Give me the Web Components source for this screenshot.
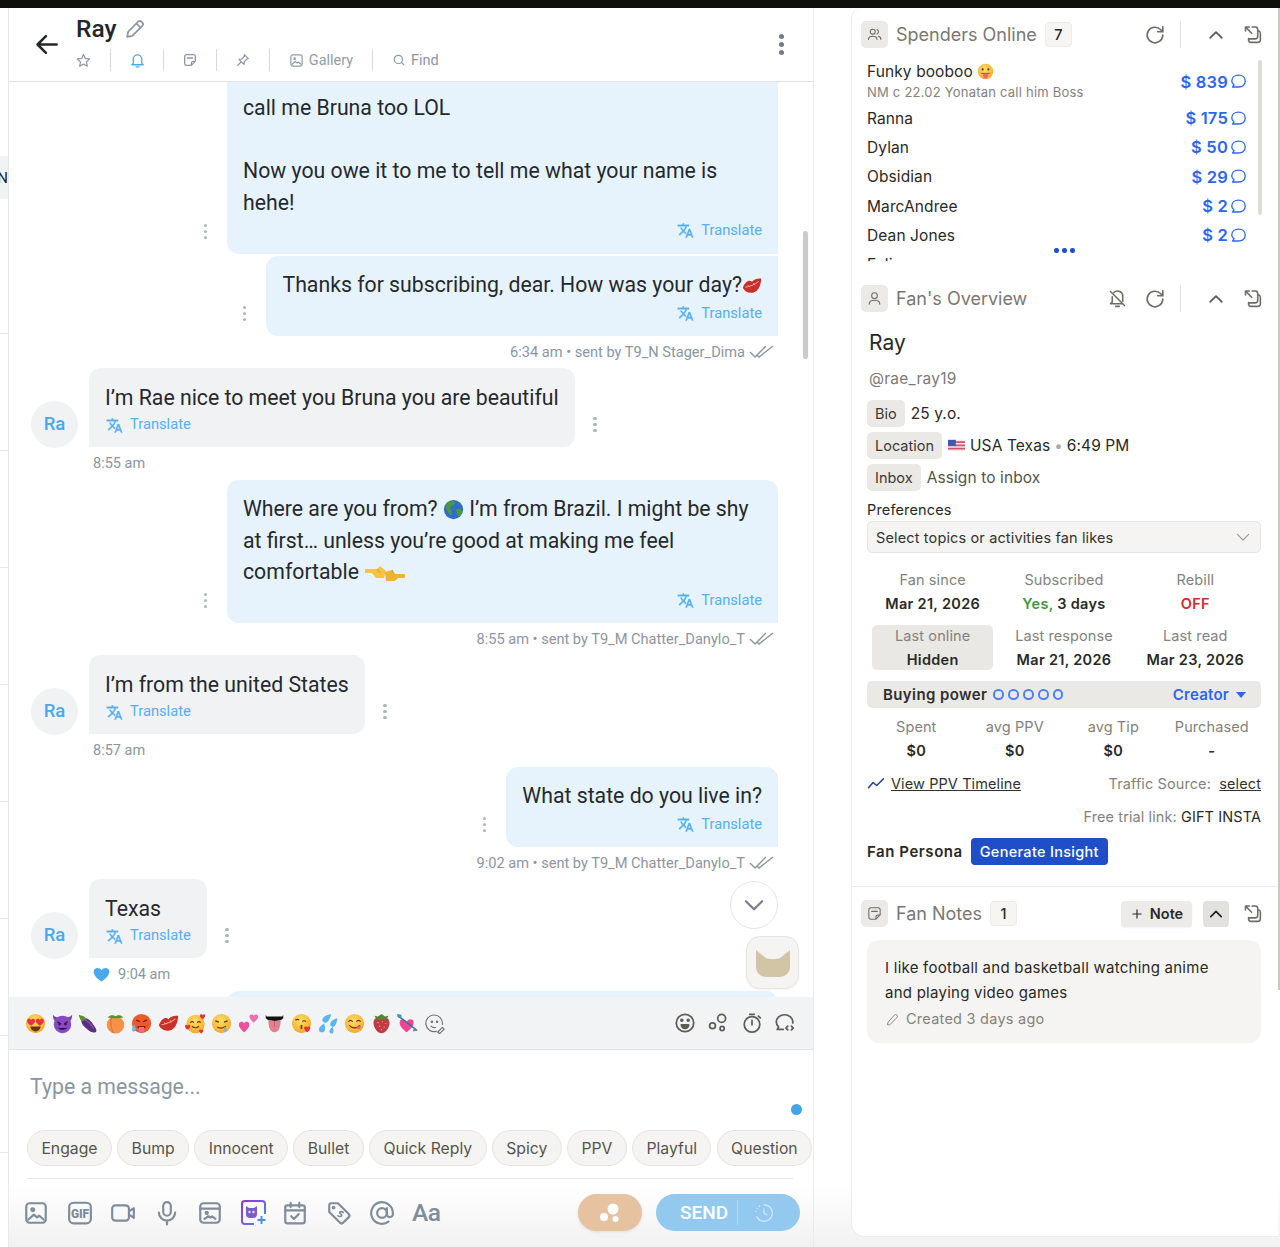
<!DOCTYPE html>
<html lang="en"><head><meta charset="utf-8"><title>Chat</title>
<style>
html,body{margin:0;padding:0;background:#fff}
body{font-family:Inter,"Liberation Sans",sans-serif}
</style></head><body>
<x-app>
  <x-topbar></x-topbar>
  <x-main>
    <x-rail></x-rail>
    <x-chat>
      <x-chat-header></x-chat-header>
      <x-messages>
        <x-msg dir="out" first pt="50" pb="12.5" style="margin-top:-40px">call me Bruna too LOL<br><br>Now you owe it to me to tell me what your name is hehe!</x-msg>
        <x-msg dir="out" joined meta="6:34 am • sent by T9_N Stager_Dima">Thanks for subscribing, dear. How was your day?<x-emoji name="kiss" size="20"></x-emoji></x-msg>
        <x-msg dir="in" time="8:55 am">I’m Rae nice to meet you Bruna you are beautiful</x-msg>
        <x-msg dir="out" meta="8:55 am • sent by T9_M Chatter_Danylo_T">Where are you from? <x-emoji name="globe" size="21"></x-emoji> I’m from Brazil. I might be shy at first… unless you’re good at making me feel comfortable <x-emoji name="hands" size="42" h="18"></x-emoji></x-msg>
        <x-msg dir="in" time="8:57 am">I’m from the united States</x-msg>
        <x-msg dir="out" meta="9:02 am • sent by T9_M Chatter_Danylo_T">What state do you live in?</x-msg>
        <x-msg dir="in" time="9:04 am" heart>Texas</x-msg>
        <x-msg dir="out"> </x-msg>
      </x-messages>
      <x-composer></x-composer>
    </x-chat>
    <x-side>
      <x-section-head title="Spenders Online" icon="users" count="7" refresh expand></x-section-head>
      <x-spenders></x-spenders>
      <x-section-head title="Fan's Overview" icon="user" refresh expand belloff style="margin-top:24px"></x-section-head>
      <x-overview></x-overview>
      <x-section-head title="Fan Notes" icon="note" count="1" notes expand style="margin-top:13px"></x-section-head>
      <x-note></x-note>
    </x-side>
  </x-main>
</x-app>
<script>
const ICONS={
 back:'<path d="M21 12H4M11.5 4.5 4 12l7.5 7.5"/>',
 pencil:'<path d="M3.500 20.500l1-5.500L15.500 4a2.500 2.500 0 0 1 3.500 0l1 1a2.500 2.500 0 0 1 0 3.500L9 19.500z M13.500 6l4.500 4.500"/>',
 star:'<path d="M12 3.5l2.6 5.6 6 .7-4.4 4.2 1.2 6L12 17l-5.4 3 1.2-6-4.4-4.2 6-.7z"/>',
 bell:'<path d="M6 16V10a6 6 0 0 1 12 0v6l2 2H4z M10 21h4"/>',
 note:'<path d="M14 20H7a3 3 0 0 1-3-3V7a3 3 0 0 1 3-3h10a3 3 0 0 1 3 3v7zM14 20v-3a3 3 0 0 1 3-3h3M8 9h8"/>',
 pin:'<path d="M14 4l6 6-2 .5-4 4-.5 4L6 11l4-.5 4-4zM9 15l-5 5"/>',
 image:'<rect x="3" y="3" width="18" height="18" rx="3"/><circle cx="9" cy="9" r="1.300"/><path d="M5 18l5-4.500 3 2.500 2-1.500 4 3.500"/>',
 search:'<circle cx="11" cy="11" r="7"/><path d="M16 16l4.500 4.500"/>',
 users:'<circle cx="9.500" cy="8" r="3.500"/><path d="M3.500 19c0-3 2.500-4.500 6-4.500s6 1.500 6 4.500M15.500 4.800a3.500 3.500 0 0 1 0 6.400M17.500 14.500c2 .5 3.500 2 3.500 4.500"/>',
 user:'<circle cx="12" cy="8" r="4"/><path d="M4.500 20c0-3.500 3-5.500 7.500-5.500s7.500 2 7.500 5.500"/>',
 refresh:'<path d="M20.500 12a8.500 8.500 0 1 1-2.500-6L20.500 8.500M20.500 3v5.500H15"/>',
 up:'<path d="M5 15.500l7-7 7 7"/>',
 down:'<path d="M4.500 8.500 12 16l7.500-7.500"/>',
 expand:'<path d="M4 8V3.500h4.500M4 3.500l7 7M7.500 16.500V18a3 3 0 0 0 3 3H18a3 3 0 0 0 3-3V10.500a3 3 0 0 0-2.500-2.800M11.500 3.500H15a3 3 0 0 1 3 3V14a3 3 0 0 1-3 3H8"/>',
 belloff:'<path d="M8 5a6 6 0 0 1 10 5v5M6 10v6l-2 2h14M10 21h4M4 4l16 16"/>',
 chat:'<path d="M12 4c5 0 8.500 3 8.500 7.500S17 19 12 19H4.500l1.800-2.800C4.500 15 3.500 13.500 3.500 11.500 3.500 7 7 4 12 4z"/>',
 plus:'<path d="M12 5v14M5 12h14"/>',
 smile:'<circle cx="12" cy="12" r="9.500"/><circle cx="8.500" cy="9" r="1" fill="currentColor"/><circle cx="15.500" cy="9" r="1" fill="currentColor"/><path d="M8 14h8a4 4 0 0 1-8 0z" fill="currentColor"/>',
 bubbles:'<circle cx="16" cy="7" r="4.300"/><circle cx="6" cy="15" r="3.200"/><circle cx="16.500" cy="18" r="2.300"/>',
 timer:'<circle cx="12" cy="13.500" r="8.500"/><path d="M12 9v5M9.500 2.500h5M19 4.500l2 2"/>',
 chatcode:'<path d="M10 19H3.500l1.500-2.500C3.500 15 2.500 13 2.500 11c0-4.500 4-8 9-8s9 3.500 9 8v1"/><path d="M15 15.500l-2 2 2 2M19 15.500l2 2-2 2"/>',
 video:'<rect x="2" y="5" width="15.500" height="14" rx="3"/><path d="M17.500 10.500l4.500-3v9l-4.500-3"/>',
 mic:'<rect x="8.500" y="2" width="7" height="12.500" rx="3.500"/><path d="M4.500 11.500a7.500 7.500 0 0 0 15 0M12 19v3.500"/>',
 album:'<rect x="3" y="3" width="18" height="18" rx="3"/><path d="M3 8h18"/><circle cx="9" cy="12" r="1"/><path d="M7 17.500l3.500-2.500 2 1.200 1.500-1 3 2.300"/>',
 cal:'<rect x="3" y="5" width="18" height="16.500" rx="2"/><path d="M3 9.500h18M8 2.500v4M16 2.500v4M8.500 15l2.500 2.500 4.500-4.500"/>',
 tag:'<path d="M3 5a2 2 0 0 1 2-2h6l10 10a2 2 0 0 1 0 2.800L15.800 21a2 2 0 0 1-2.800 0L3 11z"/><circle cx="7" cy="7" r=".8"/><path d="M16 11.500c-1-1-3-1-3.500 0s2.500 1.500 2 3c-.5 1-2.500 1-3.500 0" stroke-width="1.500"/>',
 at:'<circle cx="12" cy="12" r="4.500"/><path d="M16.500 7.500V14a3 3 0 0 0 5.500 0v-2a10 10 0 1 0-4 8"/>',
 clock:'<path d="M12 3a9 9 0 1 1-8 13"/><path d="M3.200 10v.1M4.500 7v.1M7 4.500v.1M12 7.500V12l3 2"/>',
 pen2:'<path d="M4 20l1-4L15 5a2.800 2.800 0 0 1 4 4L8 20z"/>',
 trend:'<path d="M2 17l6-7 5 4 9-9"/>',
 smilepen:'<path d="M14 21a9.500 9.500 0 1 1 7-8"/><circle cx="9" cy="10" r=".8"/><circle cx="15" cy="10" r=".8"/><path d="M8 15c1.500 1.500 3 2 5 1.500M15.500 22l5.500-5.500 2 2-5 5z"/>'
};
const EMOJI={
 heartEyes:`<circle cx="12" cy="12" r="11" fill="url(#f)"/><path d="M2.500 8.500C3 6 6 6 7 8c1-2 4-2 4.500.5S9 13 7 14.500C5 13 2 11 2.500 8.500zM12.500 8.500C13 6 16 6 17 8c1-2 4-2 4.500.5S19 13 17 14.500C15 13 12 11 12.500 8.500z" fill="#e8323c"/><path d="M6 15.500h12c-.5 3.500-3 5.500-6 5.500s-5.500-2-6-5.500z" fill="#6b3410"/>`,
 devil:`<path d="M1 2c0 4 1 7 4 8l4-5C6 5 3 5 1 2zM23 2c0 4-1 7-4 8l-4-5c3 0 6 0 8-3z" fill="#7b3fb0"/><circle cx="12" cy="13" r="10" fill="#8a49c4"/><path d="M6 10l4 2.500M18 10l-4 2.500" stroke="#2c1248" stroke-width="1.600"/><circle cx="8.500" cy="13" r="1.300" fill="#2c1248"/><circle cx="15.500" cy="13" r="1.300" fill="#2c1248"/><path d="M6.500 16.500c3 3.500 8 3.500 11 0-3 1-8 1-11 0z" fill="#2c1248"/>`,
 eggplant:`<path d="M6 6c4-1 8 2 12 8 3 4 4 7 2 8s-6 0-10-4C5 14 3 10 4 7z" fill="#5c2d82"/><path d="M8 8c3 1 7 5 10 10" stroke="#8e5cb5" stroke-width="1.200" fill="none"/><path d="M1 2l3 1c2 0 4 1 5 4-3 2-5 3-6 1S1 4 1 2z" fill="#5d8f2f"/>`,
 peach:`<circle cx="12" cy="13.500" r="10" fill="#f6914a"/><path d="M8 4c-2 4-2 13 2 19" stroke="#e06a30" stroke-width="1.100" fill="none"/><path d="M3 5c3-3 7-3 9-1 2-2 6-2 9 1-3 0-6 1-9 1S6 5 3 5z" fill="#5e8f30"/>`,
 hot:`<circle cx="12" cy="12" r="11" fill="#f0582c"/><path d="M6 8l4 2M18 8l-4 2" stroke="#5c1a0a" stroke-width="1.500"/><path d="M7 15h10l-1 2H8z" fill="#5c1a0a"/><path d="M9 16h6v3.500a3 3 0 0 1-6 0z" fill="#f06c8a"/><path d="M4 13c-2 3-3 4-3 6s3 3 4 1 0-4-1-7z" fill="#6db9ee"/>`,
 kiss:`<path d="M1 14C4 6 9 4 12 7c3-4 8-4 11-4 0 7-3 16-10 17-6 1-10-2-12-6z" fill="#c8302a"/><path d="M4 13.500c5-1 11-2.500 16-7M7 11l2 2M14 8.500l1 2.500" stroke="#f2a7a0" stroke-width="1.200" fill="none"/>`,
 hearts:`<circle cx="12" cy="12.500" r="10.500" fill="url(#f)"/><path d="M6 11c1.500-1.500 3-1.500 4 0M14 11c1-1.500 2.500-1.500 4 0" stroke="#6b3410" stroke-width="1.300" fill="none"/><path d="M8 15c2 2.500 6 2.500 8 0" stroke="#6b3410" stroke-width="1.300" fill="none"/><path d="M0 15c0-2 2.500-2 3-.5.500-1.500 3-1.500 3 .5s-2 3.500-3 4c-1-.5-3-2-3-4zM17 3c0-2 2.500-2 3-.5.500-1.500 3-1.500 3 .5s-2 3.500-3 4c-1-.5-3-2-3-4zM16 20c0-1.500 2-1.500 2.500-.5.500-1 2.500-1 2.500.5s-1.500 2.500-2.500 3.500c-1-1-2.500-2-2.500-3.500z" fill="#e8323c"/>`,
 drool:`<circle cx="12" cy="12" r="11" fill="url(#f)"/><path d="M5 9l4 1.500M19 9l-4 1.500M7 16c3 1.500 7 1.500 10-1" stroke="#6b3410" stroke-width="1.400" fill="none"/><path d="M16 16c-1 2-1.500 3-1 4.500s3 1 3-.5-1-2.500-2-4z" fill="#6db9ee"/>`,
 twoHearts:`<path d="M1 13c0-4 5-4 6-1 1-3 6-3 6 1s-4 7-6 9c-2-2-6-5-6-9z" fill="#ee4fa0"/><path d="M13 4c0-3 4-3 5-1 1-2 5-2 5 1s-3 5-5 7c-2-2-5-4-5-7z" fill="#f06cb4"/>`,
 tongue:`<path d="M3 4h18l1-2v4c-2 2-4 3-10 3S4 8 2 6V2z" fill="#111"/><path d="M5 8c4 1.500 10 1.500 14 0 0 8-2 14-7 14S5 16 5 8z" fill="#e2808f"/><path d="M12 9v7" stroke="#c25f70" stroke-width="1"/>`,
 kissHeart:`<circle cx="12" cy="12" r="11" fill="url(#f)"/><path d="M5 8c1.500-1 3-1 4.500 0M13 10c1-1.500 3-1.500 4 0" stroke="#6b3410" stroke-width="1.300" fill="none"/><path d="M11 14c2 .5 2 1.500 .5 2 1.500.5 1.500 1.500-.5 2" stroke="#6b3410" stroke-width="1.300" fill="none"/><path d="M15 17c0-2 3-2 3.500-.5.500-1.500 3.500-1.500 3.500.5s-2 4-3.500 5c-1.500-1-3.500-3-3.500-5z" fill="#e8323c"/>`,
 sweat:`<path d="M15 1c-6 1-10 4-10 7 0 3 4 4 6 2s3-5 4-9zM22 6c-5 1-8 4-8 7s4 3 5 2 3-5 3-9zM7 12c-3 2-6 4-6 7s4 4 6 2 1-6 0-9zM17 16c-2 1-4 3-4 5s3 3 4 2 1-4 0-7z" fill="#58b7f0"/>`,
 yum:`<circle cx="12" cy="12" r="11" fill="url(#f)"/><path d="M5 10c1.500-2 3.500-2 5 0M14 10c1.500-2 3.500-2 5 0M6 14c3 4 9 4 12 0" stroke="#6b3410" stroke-width="1.400" fill="none"/><path d="M14 16.500l5-2.500c1 2-.5 4.500-2 4.500s-2.500-1-3-2z" fill="#ef5f86"/>`,
 berry:`<path d="M12 5c6-1 10 2 9 8-1 5-5 10-9 10S4 18 3 13C2 7 6 4 12 5z" fill="#c43a40"/><path d="M4 3l4 1 4-3 4 3 4-1-2 4-6 1-6-1z" fill="#4e8a35"/><g fill="#f2b9a0"><circle cx="8" cy="11" r=".7"/><circle cx="13" cy="10" r=".7"/><circle cx="17" cy="12" r=".7"/><circle cx="10" cy="15" r=".7"/><circle cx="15" cy="16" r=".7"/><circle cx="12" cy="19" r=".7"/></g>`,
 arrowHeart:`<path d="M3 11c0-5 6-5 8-1 2-4 8-4 8 1s-5 8-8 11c-3-3-8-6-8-11z" fill="#ee4590"/><path d="M1 3l22 17" stroke="#3b6fa0" stroke-width="1.800"/><path d="M0 1l5 1 0 4-4-1zM20 16l3 4-5 1z" fill="#3f8fc0"/>`,
 tongueFace:`<circle cx="12" cy="12" r="11" fill="url(#f)"/><circle cx="8" cy="9" r="1.500" fill="#6b3410"/><circle cx="16" cy="9" r="1.500" fill="#6b3410"/><path d="M6 14h12v1H6z" fill="#6b3410"/><path d="M8.500 15h7v3.500a3.500 3.500 0 0 1-7 0z" fill="#f0608a"/>`,
 globe:`<circle cx="12" cy="12" r="11" fill="#2f6fc8"/><path d="M5 4c3-2 7-2 9 0l-2 3-3 1-1 3 2 3-1 5-3-4-3-5zM15 12l5-1 2 4-3 5-3-2z" fill="#4c9a3e"/>`,
 hands:`<path d="M1 4h12l3-3 6 5-2 7h-8l-4-5H1z" fill="#f6c342"/><path d="M41 9H31l-3-4-7 2 1 9h9l3-3h7z" fill="#eeb62e"/><path d="M13 4l3 4M28 5l2 4" stroke="#d99a18" stroke-width="1" fill="none"/>`,
 flag:`<rect x="0" y="4" width="24" height="16" rx="2" fill="#e9e9ee"/><path d="M0 6h24v2.300H0zM0 10.600h24v2.300H0zM0 15.200h24v2.300H0z" fill="#d5536a"/><rect x="0" y="4" width="11" height="8.500" fill="#3e5aa8"/>`,
 blueHeart:`<path d="M1 8c0-6 8-7 11-2 3-5 11-4 11 2 0 6-7 11-11 14C8 19 1 14 1 8z" fill="#4aa9ee"/>`
};
function def(tag,css,html,after){
 customElements.define(tag,class extends HTMLElement{
  connectedCallback(){
   if(this.shadowRoot)return;
   const r=this.attachShadow({mode:'open'});
   const h=typeof html==='function'?html(this):html;
   r.innerHTML='<style>'+css+'</style>'+h;
   if(after)after(this,r);
  }
 });
}
def('x-icon',`:host{display:inline-flex;align-items:center;justify-content:center;flex:none}svg{display:block;fill:none;stroke:currentColor;stroke-linecap:round;stroke-linejoin:round}`,
 el=>{const s=el.getAttribute('size')||20,w=el.getAttribute('w')||2;
 return `<svg width="${s}" height="${s}" viewBox="0 0 24 24" stroke-width="${w}">${ICONS[el.getAttribute('name')]||''}</svg>`});
def('x-emoji',`:host{display:inline-block;vertical-align:-4px;line-height:0}svg{display:block}`,
 el=>{const s=+el.getAttribute('size')||20,h=+el.getAttribute('h')||s,n=el.getAttribute('name');
 const vb=n==='hands'?'0 0 42 18':'0 0 24 24';
 return `<svg width="${s}" height="${h}" viewBox="${vb}" role="img"><defs><radialGradient id="f" cx=".45" cy=".35" r=".75"><stop offset="0" stop-color="#ffe066"/><stop offset="1" stop-color="#f2a01e"/></radialGradient></defs>${EMOJI[n]||''}</svg>`});
const TR=`<svg width="17" height="17" viewBox="0 0 24 24" fill="currentColor" stroke="currentColor" stroke-width=".5"><path d="M12.870 15.070l-2.540-2.510.030-.030c1.740-1.940 2.980-4.170 3.710-6.530H17V4h-7V2H8v2H1v1.990h11.170C11.500 7.920 10.440 9.750 9 11.350 8.070 10.320 7.300 9.190 6.690 8h-2c.730 1.630 1.730 3.170 2.980 4.560l-5.090 5.020L4 19l5-5 3.110 3.110.760-2.040zM18.500 10h-2L12 22h2l1.120-3h4.750L21 22h2l-4.500-12zm-2.620 7l1.620-4.330L19.120 17h-3.240z"/></svg>`;

def('x-app',`:host{display:flex;flex-direction:column;width:1280px;height:1247px;overflow:hidden;position:relative;background:linear-gradient(to bottom,#fff 1185px,#f1f1f1 1247px)}`,`<slot></slot>`);
def('x-topbar',`:host{display:block;height:8px;background:#100f0c;flex:none}`,``);
def('x-main',`:host{display:flex;flex:1;min-height:0}`,`<slot></slot>`);
def('x-rail',`:host{display:block;width:8px;flex:none;border-right:1px solid #e6e8ec;overflow:hidden;font:14px Roboto,sans-serif;background:#fff}
 .b{height:43px;margin-top:148px;background:#f1f2f4;color:#222;display:flex;align-items:center;justify-content:flex-end;font-size:15px;white-space:nowrap;overflow:hidden}
 .l{height:116px;border-bottom:1px solid #e6e8ec}.f{height:134px;border-bottom:1px solid #e6e8ec}`,
 `<div class="b">ON</div><div class="f"></div><div class="l"></div><div class="l"></div><div class="l"></div><div class="l"></div><div class="l"></div><div class="l"></div><div class="l"></div>`);
def('x-chat',`:host{display:flex;flex-direction:column;width:804px;flex:none;border-right:1px solid #e8eaed;font-family:Roboto,sans-serif;position:relative}`,`<slot></slot>`);
def('x-chat-header',`:host{display:flex;height:73px;flex:none;border-bottom:1px solid #dfe2e6;background:#fff;color:#8a96a3;position:relative;z-index:2}
 .arrow{padding-left:24px;color:#23262b;display:flex;align-items:center;margin-top:-1px;width:43px}
 .mid{flex:1;min-width:0}
 .name{display:flex;align-items:center;gap:8px;height:41px;font:500 24.500px/41px Roboto,sans-serif;color:#23262b}
 .name x-icon{color:#8a96a3}
 .row{display:flex;height:22px;margin-left:-18px}
 .c{width:53px;box-sizing:border-box;display:flex;align-items:center;justify-content:center;border-right:1px solid #d5d9de;font-size:14.500px;gap:5px;color:#8a96a3}
 .c.g{width:103px;color:#929ca7}.c.f{border:0;width:auto;padding-left:19px}
 .kb{width:32px;margin-right:16px;display:flex;align-items:center;justify-content:center}
 .kb i{display:block;width:5px;height:5px;border-radius:50%;background:#737d88;box-shadow:0 -8px #737d88,0 8px #737d88}`,
 `<div class="arrow"><x-icon name="back" size="27" w="2.200"></x-icon></div>
 <div class="mid"><div class="name">Ray <x-icon name="pencil" size="22" w="1.900"></x-icon></div>
 <div class="row"><div class="c"><x-icon name="star" size="17" w="1.700" style="margin-left:-2px"></x-icon></div><div class="c" style="color:#4aa9ee"><x-icon name="bell" size="17" w="1.800"></x-icon></div><div class="c"><x-icon name="note" size="16" w="1.900"></x-icon></div><div class="c"><x-icon name="pin" size="16" w="1.800"></x-icon></div><div class="c g"><x-icon name="image" size="15" w="1.900"></x-icon>Gallery</div><div class="c f"><x-icon name="search" size="14" w="2"></x-icon>Find</div></div></div>
 <div class="kb"><i></i></div>`);
def('x-messages',`:host{display:flex;flex-direction:column;flex:1;min-height:0;overflow:hidden;position:relative;background:#fff}
 .sb{position:absolute;left:794px;top:149px;width:5px;height:128px;border-radius:3px;background:#cbcbcb}
 .down{position:absolute;left:721px;top:799px;width:46px;height:46px;border:1px solid #e3e6ea;border-radius:50%;background:#fff;color:#75808c;display:flex;align-items:center;justify-content:center}
 .cat{position:absolute;left:737px;top:854px;width:51px;height:51px;border:1px solid #e7e5e1;border-radius:14px;background:#f5f4f2;display:flex;align-items:center;justify-content:center;box-shadow:0 1px 3px #0000000d}`,
 `<slot></slot><div class="sb"></div><div class="down"><x-icon name="down" size="26" w="2"></x-icon></div>
 <div class="cat"><svg width="36" height="30" viewBox="0 0 36 30"><path d="M1 2l10 8c2 1.500 12 1.500 14 0l10-8v17c0 6-5 10-11 10H12C6 29 1 25 1 19z" fill="#d1c5a5"/></svg></div>`);
def('x-msg',`:host{display:block;flex:none}
 .row{display:flex;align-items:flex-end;padding:0 35px 0 22px}
 .out{justify-content:flex-end}
 .bub{font-size:21.250px;line-height:31.500px;color:#25292e;padding:13px 16px 12px;box-sizing:border-box}
 .out .bub{background:#e6f3fc;border-radius:12px 12px 0 12px}
 .in .bub{background:#f1f2f4;border-radius:12px 12px 12px 0;padding:13.500px 16px 11.500px;margin-left:11px}
 .tight .bub{border-radius:12px 0 0 12px}
 .tr{display:flex;justify-content:flex-end;align-items:center;gap:7px;height:21.500px;margin-top:2px;color:#57aff0;font-size:14.700px;line-height:21.500px}
 .in .tr{justify-content:flex-start;padding-left:1px;margin-top:1px}
 .out .tr{padding-right:0}
 .av{width:47px;height:47px;border-radius:50%;background:#f1f2f4;color:#49a8ec;font:500 18.500px/47px Roboto,sans-serif;text-align:center;flex:none;position:relative;top:.5px}
 .kb{width:5px;display:flex;flex-direction:column;gap:2.500px;flex:none;margin-bottom:15px}
 .kb i{width:3.500px;height:3.500px;background:#aeb5bd;border-radius:50%;display:block}
 .out .kb{margin-right:18.500px}.in .kb{margin-left:18.500px}
 .meta{height:18px;margin-top:7px;margin-bottom:7.250px;font-size:14.600px;line-height:18px;color:#8b96a2;display:flex;align-items:center;justify-content:flex-end;padding-right:39px;gap:4px}
 .time{height:18px;margin-top:7.500px;margin-bottom:7.250px;font-size:14.500px;line-height:18px;color:#8b96a2;padding-left:84px;display:flex;align-items:center;gap:8px}
 .dbl{display:block}`,
 el=>{const d=el.getAttribute('dir'),m=el.getAttribute('meta'),t=el.getAttribute('time'),pb=el.getAttribute('pb'),pt=el.getAttribute('pt');
 const kb='<div class="kb"><i></i><i></i><i></i></div>';
 const st=(pb||pt)?` style="padding-bottom:${pb}px;padding-top:${pt}px"`:'';
 const has=el.textContent.trim()||el.children.length;
 const bub=`<div class="bub"${st} ${has?'':'data-e'}><slot></slot>${has?`<div class="tr">${TR}Translate</div>`:''}</div>`;
 return `<div class="${el.hasAttribute('joined')?'tight ':''}">
 <div class="row ${d}">${d==='in'?`<div class="av">Ra</div>`+bub+kb:(has?kb:'')+bub}</div>
 ${m?`<div class="meta">${m}<svg class="dbl" width="25" height="14" viewBox="0 0 25 14" fill="none" stroke="#8b96a2" stroke-width="1.400"><path d="M1 7l5 5L17 1M8 10l2 2L24 1"/></svg></div>`:''}
 ${t?`<div class="time">${el.hasAttribute('heart')?'<x-emoji name="blueHeart" size="17"></x-emoji>':''}${t}</div>`:''}</div>`},
 (el,r)=>{const b=r.querySelector('.bub[data-e]');if(b){b.style.width='551px';b.style.height='60px'}
  if(el.hasAttribute('joined')){el.style.marginTop='2px'}
  if(el.hasAttribute('first'))r.querySelector('.bub').style.width='551px';
  if(el.getAttribute('meta')&&el.textContent.includes('Brazil'))r.querySelector('.bub').style.width='551px';
 });
def('x-chip',`:host{display:inline-flex;align-items:center;height:36px;box-sizing:border-box;padding:0 13.400px;border:1px solid #e6e4e0;background:#f5f4f2;border-radius:18px;font:15.750px Inter,sans-serif;color:#56544d;flex:none;white-space:nowrap}`,`<slot></slot>`);
def('x-composer',`:host{display:block;flex:none;height:250px}
 .bar{height:52px;background:#f2f3f5;border-bottom:1px solid #e2e5e8;display:flex;align-items:center;padding-left:16px;position:relative}
 .em{display:flex;gap:5.600px;align-items:center}
 .act{margin-left:auto;display:flex;gap:11.500px;margin-right:17px;color:#5f5d53}
 .input{height:80px;position:relative;box-sizing:border-box;padding:25px 21px 0;font-size:21.250px;line-height:24px;color:#8a96a3;background:#fff}
 .dot{position:absolute;left:782px;top:54px;width:11px;height:11px;border-radius:50%;background:#45a5ea}
 .chips{display:flex;gap:5.300px;padding-left:18px;background:#fff;height:37px;overflow:hidden;white-space:nowrap;width:786px}
 .line{height:1px;background:#e9e9e7;margin:11px 20px 0 18px}
 .tools{display:flex;align-items:center;margin-top:15px;padding-left:14px;height:37px;color:#7f8c99}
 .tools x-icon{margin-right:17.600px}
 .aa{font:500 24.500px/24px Roboto,sans-serif;color:#7f8c99;letter-spacing:-.5px;margin-left:-1px}
 .gif{width:26px;height:26px;flex:none;margin-right:17.600px}
 .ai{width:27px;height:27px;flex:none;margin-right:15.300px;margin-left:-1px}
 .orange{margin-left:auto;width:64px;height:37px;border-radius:19px;background:#e6c2a0;display:flex;align-items:center;justify-content:center;margin-right:14px;box-shadow:0 1px 3px #0000001a}
 .send{width:144px;height:37px;border-radius:19px;background:#93c9ef;color:#fff;display:flex;align-items:center;margin-right:13px;font:500 19px Roboto,sans-serif}
 .send b{font-weight:500;padding-left:24px;border-right:1px solid #b5dbf5;height:25px;line-height:25px;margin-right:15px;width:57px}`,
 `<div class="bar"><div class="em">${['heartEyes','devil','eggplant','peach','hot','kiss','hearts','drool','twoHearts','tongue','kissHeart','sweat','yum','berry','arrowHeart'].map(n=>`<x-emoji name="${n}" size="21"></x-emoji>`).join('')}<x-icon name="smilepen" size="21" w="1.300" style="color:#6f716e"></x-icon></div>
 <div class="act"><x-icon name="smile" size="22" w="1.900"></x-icon><x-icon name="bubbles" size="22" w="1.900"></x-icon><x-icon name="timer" size="22" w="1.900"></x-icon><x-icon name="chatcode" size="22" w="1.900"></x-icon></div></div>
 <div class="input">Type a message...<div class="dot"></div></div>
 <div class="chips">${['Engage','Bump','Innocent','Bullet','Quick Reply','Spicy','PPV','Playful','Question'].map(c=>`<x-chip>${c}</x-chip>`).join('')}</div>
 <div class="line"></div>
 <div class="tools"><x-icon name="image" size="26" w="2"></x-icon>
 <svg class="gif" viewBox="0 0 24 24" fill="none" stroke="currentColor" stroke-width="2"><rect x="2" y="2.500" width="20" height="19" rx="4"/><text x="12" y="16.500" font-family="Roboto" font-size="11" font-weight="900" text-anchor="middle" fill="currentColor" stroke="none">GIF</text></svg>
 <x-icon name="video" size="26" w="2"></x-icon><x-icon name="mic" size="26" w="2"></x-icon><x-icon name="album" size="26" w="2"></x-icon>
 <svg class="ai" viewBox="0 0 27 27" fill="none"><defs><linearGradient id="g" x1="0" y1="0" x2="1" y2="1"><stop offset="0" stop-color="#9b30d8"/><stop offset="1" stop-color="#4b8fe8"/></linearGradient></defs><path d="M14 25H5a3 3 0 0 1-3-3V5a3 3 0 0 1 3-3h17a3 3 0 0 1 3 3v10" stroke="url(#g)" stroke-width="2"/><path d="M6 7l3 2h5l3-2v8a4 4 0 0 1-4 4h-3a4 4 0 0 1-4-4z" fill="#7c5cc8"/><circle cx="9.500" cy="13" r="1.200" fill="#e6e0f8"/><circle cx="13.500" cy="13" r="1.200" fill="#e6e0f8"/><path d="M21.500 17v8M17.500 21h8" stroke="#4b8fe8" stroke-width="2"/></svg>
 <x-icon name="cal" size="26" w="2"></x-icon><x-icon name="tag" size="26" w="2"></x-icon><x-icon name="at" size="26" w="2"></x-icon><span class="aa">Aa</span>
 <div class="orange"><svg width="24" height="24" viewBox="0 0 24 24" fill="#fff"><circle cx="15" cy="8" r="5.500"/><circle cx="6" cy="16" r="4"/><circle cx="17.500" cy="18" r="3"/></svg></div>
 <div class="send"><b>SEND</b><x-icon name="clock" size="22" w="1.500" style="color:#cfe6f8;margin:0"></x-icon></div></div>`);
def('x-side',`:host{display:block;width:427px;margin-left:37px;flex:none;height:1229px;border-left:1px solid #ececea;border-bottom:1px solid #ececea;border-radius:10px 0 0 14px;box-sizing:border-box;background:#fff;position:relative;font-family:Inter,sans-serif;color:#2a2926}
 .bar{position:absolute;left:426px;top:0;width:2px;height:982px;background:#c9c8c4}`,`<slot></slot><div class="bar"></div>`);
def('x-section-head',`:host{display:flex;align-items:center;height:27px;padding:0 15px 0 9px;position:relative}
 :host(:first-child){margin-top:13px}
 .ib{width:27px;height:27px;border-radius:5px;background:#eceae7;color:#6e6c66;display:flex;align-items:center;justify-content:center;flex:none}
 .t{margin-left:8px;font-size:18px;color:#7a7771;white-space:nowrap}
 .c{margin-left:8px;width:27px;height:25px;border:1px solid #ecebe8;border-radius:4px;background:#f6f5f3;font-size:14.500px;font-weight:500;display:flex;align-items:center;justify-content:center;color:#2a2926;box-sizing:border-box}
 .sp{flex:1}.a{color:#6e6c66;display:flex;align-items:center}
 .d{width:1px;height:27px;background:#e6e5e2;margin:0 25px 0 14px}
 .note{width:71px;height:26px;border-radius:4px;background:#ecebe8;font-size:14.500px;font-weight:600;display:flex;align-items:center;justify-content:center;gap:6px;color:#2a2926;box-shadow:0 1px 2px #0000000f;margin-right:11px}
 .cv{width:26px;height:26px;border-radius:4px;background:#e2e1dd;display:flex;align-items:center;justify-content:center;color:#222;margin-right:13px}`,
 el=>{const c=el.getAttribute('count');
 const notes=el.hasAttribute('notes');
 return `<div class="ib"><x-icon name="${el.getAttribute('icon')}" size="17" w="1.500"></x-icon></div><div class="t">${el.getAttribute('title')}</div>${c?`<div class="c">${c}</div>`:''}<div class="sp"></div>
 ${notes?`<div class="note"><x-icon name="plus" size="14" w="2"></x-icon>Note</div><div class="cv"><x-icon name="up" size="18" w="2.200"></x-icon></div>`:
 `${el.hasAttribute('belloff')?`<x-icon class="a" name="belloff" size="21" w="1.800" style="margin-right:16px"></x-icon>`:''}<x-icon class="a" name="refresh" size="22" w="1.800"></x-icon><div class="d"></div><x-icon class="a" name="up" size="20" w="2" style="color:#55534e"></x-icon>`}
 <x-icon name="expand" size="21" w="1.800" style="color:#6e6c66;margin-left:${notes?0:16}px"></x-icon>`});
def('x-spenders',`:host{display:block;height:201px;margin-top:12px;overflow:hidden;position:relative;padding:0 30px 0 15px;font-size:15.500px}
 .r{display:flex;justify-content:space-between;align-items:center;height:29.300px}
 .r.f{height:43.500px}
 .n{letter-spacing:.1px;color:#2a2926;white-space:nowrap}
 .s{font-size:13px;color:#84827d;letter-spacing:.22px;margin-top:3px;line-height:17px}
 .p{color:#2b66ee;font-weight:600;font-size:16.500px;display:flex;align-items:center;gap:1px;letter-spacing:.2px}
 .p x-icon{color:#2b66ee}
 .sb{position:absolute;left:406px;top:0;width:4px;height:155px;background:#dcdcda;border-radius:2px}
 .dots{position:absolute;left:202px;top:188px;display:flex;gap:3.500px}
 .dots i{width:4.500px;height:4.500px;border-radius:50%;background:#1f4fc8;display:block}`,
 ()=>{const row=(n,p)=>`<div class="r"><div class="n">${n}</div>${p?`<div class="p">$ ${p}<x-icon name="chat" size="19" w="1.700"></x-icon></div>`:''}</div>`;
 return `<div class="r f"><div><div class="n">Funky booboo <x-emoji name="tongueFace" size="17" style="vertical-align:-3px"></x-emoji></div><div class="s">NM c 22.02 Yonatan call him Boss</div></div><div class="p">$ 839<x-icon name="chat" size="19" w="1.700"></x-icon></div></div>
 ${row('Ranna',175)}${row('Dylan',50)}${row('Obsidian',29)}${row('MarcAndree',2)}${row('Dean Jones',2)}${row('Feline')}
 <div class="sb"></div><div class="dots"><i></i><i></i><i></i></div>`});
def('x-overview',`:host{display:block;padding:0 17px 21px 15px;border-bottom:1px solid #ecebe9;margin-top:17px;font-size:15.500px}
 .ray{font-size:21px;line-height:28px;margin-left:2px;color:#2a2926}
 .at{line-height:22px;margin:11px 0 10px 2px;color:#7d7a74;letter-spacing:.25px}
 .cr{display:flex;align-items:center;height:27px;margin-bottom:5px;letter-spacing:.1px;white-space:nowrap}
 .chip{background:#eae9e6;border-radius:5px;height:27px;padding:0 8px;display:flex;align-items:center;font-size:14.500px;margin-right:6px;letter-spacing:0;color:#3a3935}
 .pl{line-height:20px;margin-top:9px;font-size:14.500px;letter-spacing:.15px}
 .sel{height:32px;margin-top:1px;border:1px solid #e7e6e3;border-radius:5px;background:#f5f4f2;display:flex;align-items:center;justify-content:space-between;box-sizing:border-box;padding:0 8px;font-size:14.500px;letter-spacing:.14px;color:#33322e}
 .g3,.g4{display:grid;text-align:center}.g3{grid-template-columns:repeat(3,1fr)}.g4{grid-template-columns:repeat(4,1fr)}
 .lb{line-height:22px;font-size:14.500px;color:#84827c;letter-spacing:.1px;white-space:nowrap}
 .v{line-height:26px;font-size:14.500px;font-weight:600;letter-spacing:.3px;white-space:nowrap;color:#2a2926}
 .hid{height:45px;background:#e9e8e5;border-radius:5px;margin:0 5px}
 .rowb{height:27px;margin-top:11px;background:#eae9e6;border-radius:5px;display:flex;align-items:center;padding:0 15px 0 16px;font-size:15px;font-weight:600;letter-spacing:.4px;color:#2f2e2a}
 .ci{display:flex;gap:4.400px;margin-left:6px}.ci i{display:block;width:6.500px;height:6.500px;border:2px solid #4a82f6;border-radius:50%}
 .cr2{margin-left:auto;color:#2b66ee;display:flex;align-items:center;gap:7px;letter-spacing:.25px}
 .tri{width:0;height:0;border:5px solid transparent;border-top:6px solid #2b66ee;border-bottom:0}
 .ln{display:flex;justify-content:space-between;align-items:center;line-height:22px;margin-top:10px;font-size:14.500px;letter-spacing:.1px}
 .ln u{color:#33322e}.mt{color:#84827c}
 .pr{display:flex;align-items:center;margin-top:10px;font-weight:600;font-size:15px;letter-spacing:.55px;height:27px;gap:8px}
 .btn{background:#1f4fc8;color:#fff;height:27px;padding:0 9px;border-radius:4px;display:flex;align-items:center;font-weight:500;font-size:14.500px;letter-spacing:.3px}`,
 `<div class="ray">Ray</div><div class="at">@rae_ray19</div>
 <div class="cr"><span class="chip">Bio</span>25 y.o.</div>
 <div class="cr"><span class="chip">Location</span><x-emoji name="flag" size="17" style="vertical-align:0;margin-right:5px"></x-emoji>USA Texas<span style="color:#aaa;margin:0 4px;font-size:15px">•</span>6:49 PM</div>
 <div class="cr" style="margin-bottom:0"><span class="chip">Inbox</span><span style="color:#55534e">Assign to inbox</span></div>
 <div class="pl">Preferences</div>
 <div class="sel">Select topics or activities fan likes<x-icon name="down" size="18" w="1.500" style="color:#9d9b96"></x-icon></div>
 <div class="g3" style="margin-top:16px"><div><div class="lb">Fan since</div><div class="v">Mar 21, 2026</div></div><div><div class="lb">Subscribed</div><div class="v"><span style="color:#3f9a3f">Yes,</span> 3 days</div></div><div><div class="lb">Rebill</div><div class="v" style="color:#d22c2c">OFF</div></div></div>
 <div class="g3" style="margin-top:8px;height:45px"><div class="hid"><div class="lb">Last online</div><div class="v">Hidden</div></div><div><div class="lb">Last response</div><div class="v">Mar 21, 2026</div></div><div><div class="lb">Last read</div><div class="v">Mar 23, 2026</div></div></div>
 <div class="rowb">Buying power<span class="ci"><i></i><i></i><i></i><i></i><i></i></span><span class="cr2">Creator<span class="tri"></span></span></div>
 <div class="g4" style="margin-top:7.500px"><div><div class="lb">Spent</div><div class="v">$0</div></div><div><div class="lb">avg PPV</div><div class="v">$0</div></div><div><div class="lb">avg Tip</div><div class="v">$0</div></div><div><div class="lb">Purchased</div><div class="v">-</div></div></div>
 <div class="ln" style="margin-top:9.500px"><span style="display:flex;align-items:center;gap:6px"><x-icon name="trend" size="18" w="2" style="color:#1f3f9c"></x-icon><u>View PPV Timeline</u></span><span><span class="mt">Traffic Source:</span>&nbsp; <u>select</u></span></div>
 <div class="ln" style="justify-content:flex-end;margin-top:11px"><span class="mt">Free trial link:</span>&nbsp;GIFT INSTA</div>
 <div class="pr">Fan Persona<span class="btn">Generate Insight</span></div>`);
def('x-note',`:host{display:block;margin:13px 17px 0 15px;height:103px;background:#f5f4f2;border-radius:12px;padding:15px 40px 0 18px;box-sizing:border-box;font-size:15px;line-height:25px;letter-spacing:.25px;color:#2a2926}
 .c{display:flex;align-items:center;gap:6px;margin-top:3px;color:#84827c;font-size:14.500px;line-height:22px}`,
 `I like football and basketball watching anime and playing video games<div class="c"><x-icon name="pen2" size="15" w="1.500"></x-icon>Created 3 days ago</div>`);
</script>
</body></html>
